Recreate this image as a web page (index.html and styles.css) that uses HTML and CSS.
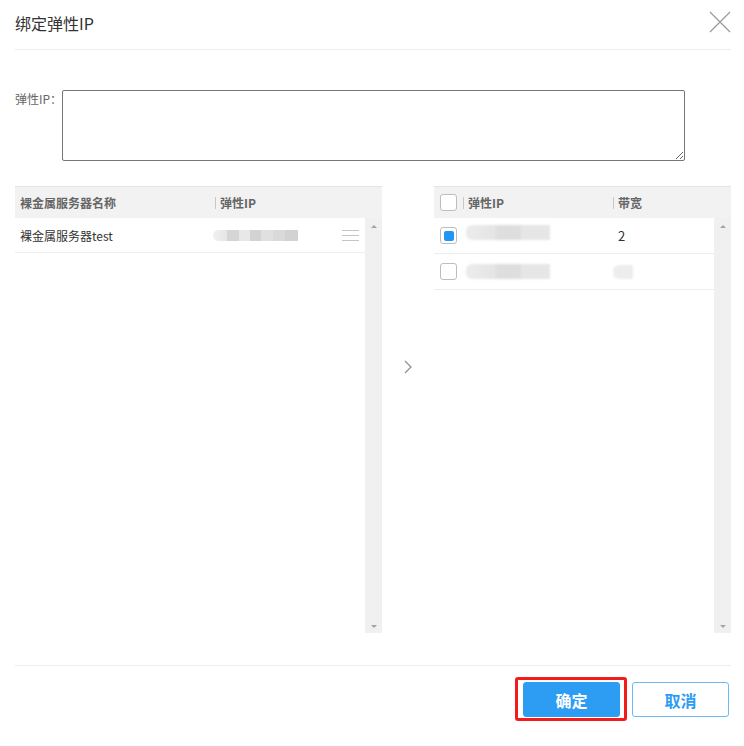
FILE: index.html
```html
<!DOCTYPE html>
<html lang="zh-CN">
<head>
<meta charset="UTF-8">
<meta name="viewport" content="width=device-width, initial-scale=1.0">
<title>绑定弹性IP</title>
<link rel="stylesheet" href="styles.css">
</head>
<body>

<div class="dialog">
    <div class="dialog-header">
        <span class="dialog-title">绑定弹性IP</span>
        <svg class="close-btn" width="22" height="22" viewBox="0 0 22 22">
            <path d="M1 1L21 21M21 1L1 21" stroke="#9a9a9a" stroke-width="1.2" fill="none"/>
        </svg>
    </div>

    <div class="form-row">
        <label class="form-label">弹性IP：</label>
        <textarea class="form-textarea"></textarea>
    </div>

    <div class="transfer">
        <!-- left list: servers -->
        <div class="panel panel-left">
            <div class="panel-head">
                <div class="cell cell-name">裸金属服务器名称</div>
                <div class="cell cell-ip"><span class="sep"></span>弹性IP</div>
            </div>
            <div class="panel-body">
                <div class="panel-rows">
                    <div class="row">
                        <div class="cell cell-name">裸金属服务器test</div>
                        <div class="cell cell-ip">
                            <div class="blur blur-left"></div>
                            <span class="drag-handle"><i></i><i></i><i></i></span>
                        </div>
                    </div>
                </div>
                <div class="scrollbar">
                    <span class="arrow-up"></span>
                    <span class="arrow-down"></span>
                </div>
            </div>
        </div>

        <div class="transfer-mid">
            <svg width="10" height="14" viewBox="0 0 10 14">
                <path d="M2 1L8 7L2 13" stroke="#8c8c8c" stroke-width="1.2" fill="none"/>
            </svg>
        </div>

        <!-- right list: elastic ips -->
        <div class="panel panel-right">
            <div class="panel-head">
                <div class="cell cell-check"><span class="checkbox"></span></div>
                <div class="cell cell-eip"><span class="sep"></span>弹性IP</div>
                <div class="cell cell-bw"><span class="sep"></span>带宽</div>
            </div>
            <div class="panel-body">
                <div class="panel-rows">
                    <div class="row row-tall">
                        <div class="cell cell-check"><span class="checkbox checked"></span></div>
                        <div class="cell cell-eip"><div class="blur blur-right blur-up"></div></div>
                        <div class="cell cell-bw bw-val">2</div>
                    </div>
                    <div class="row row-tall">
                        <div class="cell cell-check"><span class="checkbox"></span></div>
                        <div class="cell cell-eip"><div class="blur blur-right"></div></div>
                        <div class="cell cell-bw"><div class="blur blur-small"></div></div>
                    </div>
                </div>
                <div class="scrollbar">
                    <span class="arrow-up"></span>
                    <span class="arrow-down"></span>
                </div>
            </div>
        </div>
    </div>

    <div class="dialog-footer">
        <button class="btn btn-primary btn-marked">确定</button>
        <button class="btn btn-default">取消</button>
    </div>
</div>

</body>
</html>
```

FILE: styles.css
```css
/* Bind elastic IP dialog */
body {
    margin: 0;
    background: #fff;
    font-family: "Noto Sans CJK SC", "Liberation Sans", sans-serif;
    font-size: 12px;
    color: #333;
}

.dialog {
    width: 744px;
    height: 746px;
    padding: 0 13px 0 15px;
    box-sizing: border-box;
}

.dialog-header {
    height: 49px;
    display: flex;
    align-items: center;
    justify-content: space-between;
    border-bottom: 1px solid #eee;
}

.dialog-title {
    font-size: 16px;
    color: #333;
    margin-top: -3px;
}

.close-btn {
    margin-top: -5px;
}

.form-row {
    display: flex;
    margin-top: 40px;
}

.form-label {
    width: 47px;
    color: #666;
    line-height: 16px;
    padding-top: 1px;
    white-space: nowrap;
}

.form-textarea {
    width: 623px;
    height: 71px;
    box-sizing: border-box;
    border: 1px solid #767676;
    border-radius: 2px;
    padding: 2px;
    resize: vertical;
    font-family: inherit;
}

.transfer {
    display: flex;
    height: 447px;
    margin-top: 25px;
}

.panel {
    display: flex;
    flex-direction: column;
}

.panel-left {
    width: 367px;
}

.panel-right {
    width: 297px;
}

.transfer-mid {
    width: 52px;
    display: flex;
    justify-content: center;
    align-items: flex-start;
    padding-top: 174px;
    box-sizing: border-box;
}

.panel-head {
    height: 31px;
    display: flex;
    align-items: center;
    border-top: 1px solid #e4e4e4;
    background: #f2f2f2;
    color: #666;
    font-weight: bold;
}

.panel-body {
    flex: 1;
    display: flex;
}

.panel-rows {
    flex: 1;
}

.row {
    height: 34px;
    display: flex;
    align-items: center;
    border-bottom: 1px solid #eee;
}

.row-tall {
    height: 35px;
}

.cell {
    display: flex;
    align-items: center;
    white-space: nowrap;
}

.sep {
    width: 1px;
    height: 12px;
    background: #c8c8c8;
    margin-right: 4px;
}

.cell-name {
    width: 195px;
    padding-left: 5px;
}

.cell-ip {
    flex: 1;
}

.cell-check {
    width: 29px;
    padding-left: 6px;
    box-sizing: border-box;
}

.cell-eip {
    width: 150px;
}

.cell-bw {
    flex: 1;
}

.bw-val {
    padding-left: 5px;
    font-size: 13px;
}

.checkbox {
    width: 15px;
    height: 15px;
    border: 1px solid #bdbdbd;
    border-radius: 3px;
    background: #fff;
    display: flex;
    align-items: center;
    justify-content: center;
}

.checkbox.checked:after {
    content: "";
    width: 10px;
    height: 10px;
    border-radius: 2px;
    background: #2196f3;
}

/* masked ip values */
.blur {
    height: 11px;
    background: linear-gradient(90deg, #f0f0f0 0, #e6e6e6 14px, #d5d5d5 14px, #d5d5d5 26px,
        #e8e8e8 26px, #e8e8e8 37px, #d3d3d3 37px, #d3d3d3 48px, #e0e0e0 48px, #e0e0e0 60px,
        #d9d9d9 60px, #d9d9d9 72px, #d2d2d2 72px);
    border-radius: 6px 0 0 6px;
}

.blur-left {
    width: 85px;
    margin-left: -2px;
}

.blur-right {
    width: 84px;
    height: 15px;
    margin-left: 3px;
    filter: blur(1.2px);
    background: linear-gradient(90deg, #ececec 0, #e4e4e4 30px, #dedede 30px, #dedede 55px, #e6e6e6 55px);
}

.blur-up {
    margin-top: -6px;
}

.blur-small {
    width: 20px;
    height: 14px;
    background: #ededed;
    filter: blur(1px);
}

.drag-handle {
    margin-left: auto;
    margin-right: 6px;
    width: 17px;
    display: flex;
    flex-direction: column;
    gap: 4px;
}

.drag-handle i {
    height: 1px;
    background: #c4c4c4;
}

.scrollbar {
    width: 17px;
    background: #f0f0f0;
    display: flex;
    flex-direction: column;
    justify-content: space-between;
    align-items: center;
    padding: 7px 0 5px;
    box-sizing: border-box;
}

.arrow-up,
.arrow-down {
    width: 0;
    height: 0;
    border-left: 3px solid transparent;
    border-right: 3px solid transparent;
}

.arrow-up {
    border-bottom: 3px solid #a3a3a3;
}

.arrow-down {
    border-top: 3px solid #a3a3a3;
}

.dialog-footer {
    display: flex;
    justify-content: flex-end;
    gap: 12px;
    margin-top: 32px;
    padding: 16px 2px 0 0;
    border-top: 1px solid #eee;
}

.btn {
    width: 97px;
    height: 35px;
    border-radius: 3px;
    font-family: inherit;
    font-size: 16px;
    font-weight: bold;
    cursor: pointer;
}

.btn-primary {
    background: #2d9cf3;
    border: 1px solid #2d9cf3;
    color: #fff;
}

.btn-default {
    background: #fff;
    border: 1px solid #6db9f6;
    color: #2d9cf3;
}

/* red annotation box around confirm button */
.btn-marked {
    position: relative;
}

.btn-marked:after {
    content: "";
    position: absolute;
    top: -6px;
    left: -9px;
    right: -8px;
    bottom: -5px;
    border: 3px solid #f21c1c;
    border-radius: 3px;
}
```
